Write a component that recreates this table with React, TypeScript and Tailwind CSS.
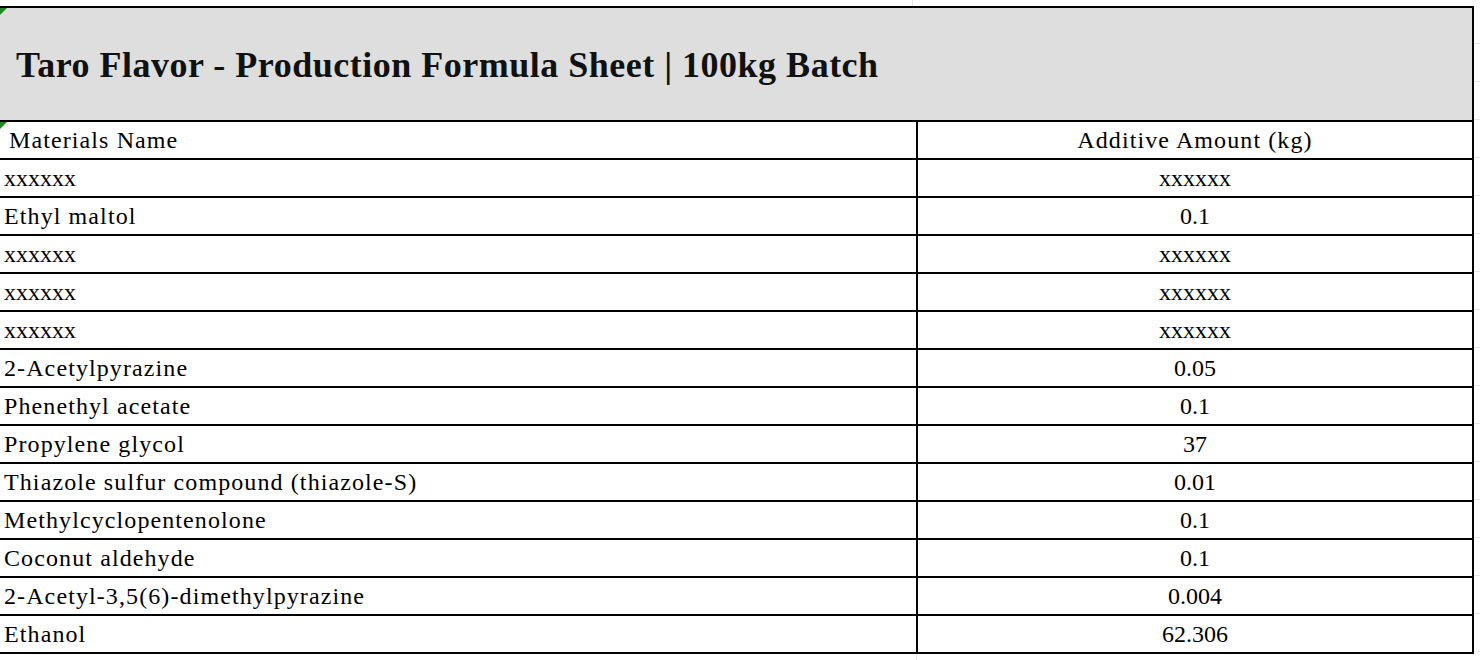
const rows: [string, string][] = [
  ["xxxxxx", "xxxxxx"],
  ["Ethyl maltol", "0.1"],
  ["xxxxxx", "xxxxxx"],
  ["xxxxxx", "xxxxxx"],
  ["xxxxxx", "xxxxxx"],
  ["2-Acetylpyrazine", "0.05"],
  ["Phenethyl acetate", "0.1"],
  ["Propylene glycol", "37"],
  ["Thiazole sulfur compound (thiazole-S)", "0.01"],
  ["Methylcyclopentenolone", "0.1"],
  ["Coconut aldehyde", "0.1"],
  ["2-Acetyl-3,5(6)-dimethylpyrazine", "0.004"],
  ["Ethanol", "62.306"],
];

const Marker = () => (
  <svg className="absolute left-0 top-0" width="7" height="7" viewBox="0 0 7 7">
    <polygon points="0,0 7,0 0,7" fill="#1f8a1f" />
  </svg>
);

const App = () => {
  return (
    <div
      className="w-[1480px] h-[660px] bg-white overflow-hidden flex flex-col text-black"
      style={{ fontFamily: '"Liberation Serif", "DejaVu Serif", serif' }}
    >
      {/* faint gridline above the sheet */}
      <div className="h-[6px] flex shrink-0">
        <div className="w-[912px]" />
        <div className="w-px bg-[#e4e4e4]" />
      </div>

      <div className="flex shrink-0">
        {/* Sheet */}
        <div className="w-[1474px] border-t-2 border-r-2 border-black">
          <div className="relative h-[114px] bg-[#dedede] border-b-2 border-black flex items-center pl-[16px]">
            <Marker />
            <h1 className="text-[36px] font-bold tracking-[0.5px] pt-[2px] text-[#111]">
              Taro Flavor - Production Formula Sheet | 100kg Batch
            </h1>
          </div>

          <div className="flex h-[38px] border-b-2 border-black text-[24px] tracking-[1.1px]">
            <div className="relative w-[918px] border-r-2 border-black flex items-center pl-[9px]">
              <Marker />
              Materials Name
            </div>
            <div className="flex-1 flex items-center justify-center">Additive Amount (kg)</div>
          </div>

          {rows.map(([name, amount], idx) => (
            <div key={idx} className="flex h-[38px] border-b-2 border-black text-[24px]">
              <div
                className={`w-[918px] border-r-2 border-black flex items-center pl-[4px] ${
                  name === "xxxxxx" ? "tracking-normal" : "tracking-[1.1px]"
                }`}
              >
                {name}
              </div>
              <div className="flex-1 flex items-center justify-center">{amount}</div>
            </div>
          ))}
        </div>

        {/* gridlines to the right of the sheet */}
        <div className="flex-1 flex flex-col">
          {Array.from({ length: 17 }).map((_, i) => (
            <div key={i} className="h-[38px] border-b border-[#e4e4e4]" />
          ))}
        </div>
      </div>

      <div className="flex flex-1">
        <div className="w-[916px]" />
        <div className="w-px bg-[#e4e4e4]" />
      </div>
    </div>
  );
};

export default App;
